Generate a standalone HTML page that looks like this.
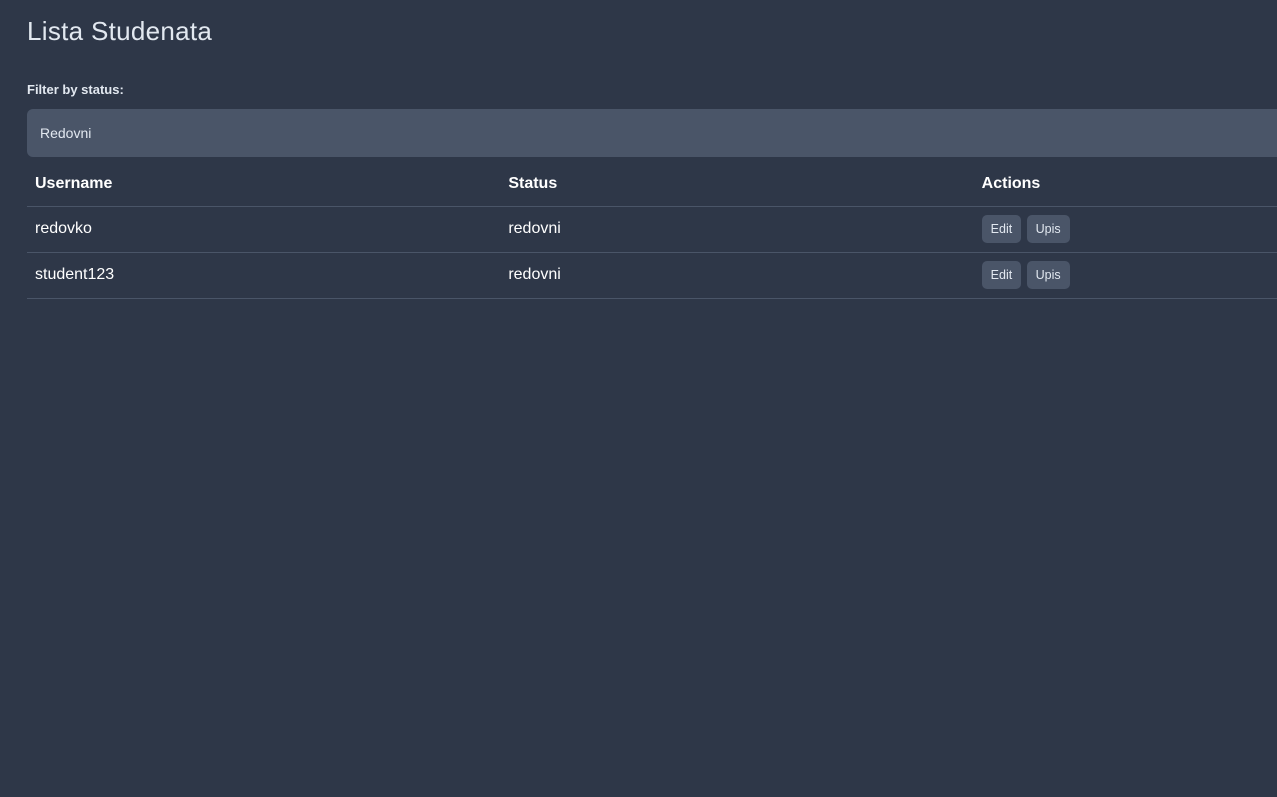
<!DOCTYPE html>
<html><head><meta charset="utf-8"><style>
html,body{margin:0;padding:0;background:#2e3748;overflow:hidden;width:1277px;height:797px;font-family:"Liberation Sans",sans-serif;color:#e2e8f0}
.wrap{position:absolute;left:27px;top:0;width:1420px}
h1{position:absolute;top:16px;left:0;margin:0;font-size:26px;font-weight:normal;color:#e2e8f0;letter-spacing:0.3px}
.lbl{position:absolute;top:82px;left:0;font-size:13px;font-weight:bold;color:#e2e8f0}
.sel{position:absolute;top:109px;left:0;width:1420px;height:48px;background:#4a5568;border-radius:6px;font-size:14px;line-height:48px;padding-left:13px;box-sizing:border-box;color:#e2e8f0}
table{position:absolute;top:163px;left:0;width:1420px;border-collapse:collapse}
th,td{text-align:left;padding:0 8px;border-bottom:1px solid #4a5568;width:473px;box-sizing:border-box}
th{height:43px;font-size:16px;font-weight:bold;color:#fff}
td{height:46px;font-size:16px;color:#fff}
.b{display:inline-block;background:#4a5568;border-radius:5px;height:28px;line-height:28px;font-size:12.5px;color:#e2e8f0;padding:0 9px;margin-right:1px;vertical-align:middle}
</style></head><body><div class="wrap">
<h1>Lista Studenata</h1>
<div class="lbl">Filter by status:</div>
<div class="sel">Redovni</div>
<table>
<tr><th>Username</th><th>Status</th><th>Actions</th></tr>
<tr><td>redovko</td><td>redovni</td><td><span class="b">Edit</span> <span class="b">Upis</span></td></tr>
<tr><td>student123</td><td>redovni</td><td><span class="b">Edit</span> <span class="b">Upis</span></td></tr>
</table>
</div></body></html>
